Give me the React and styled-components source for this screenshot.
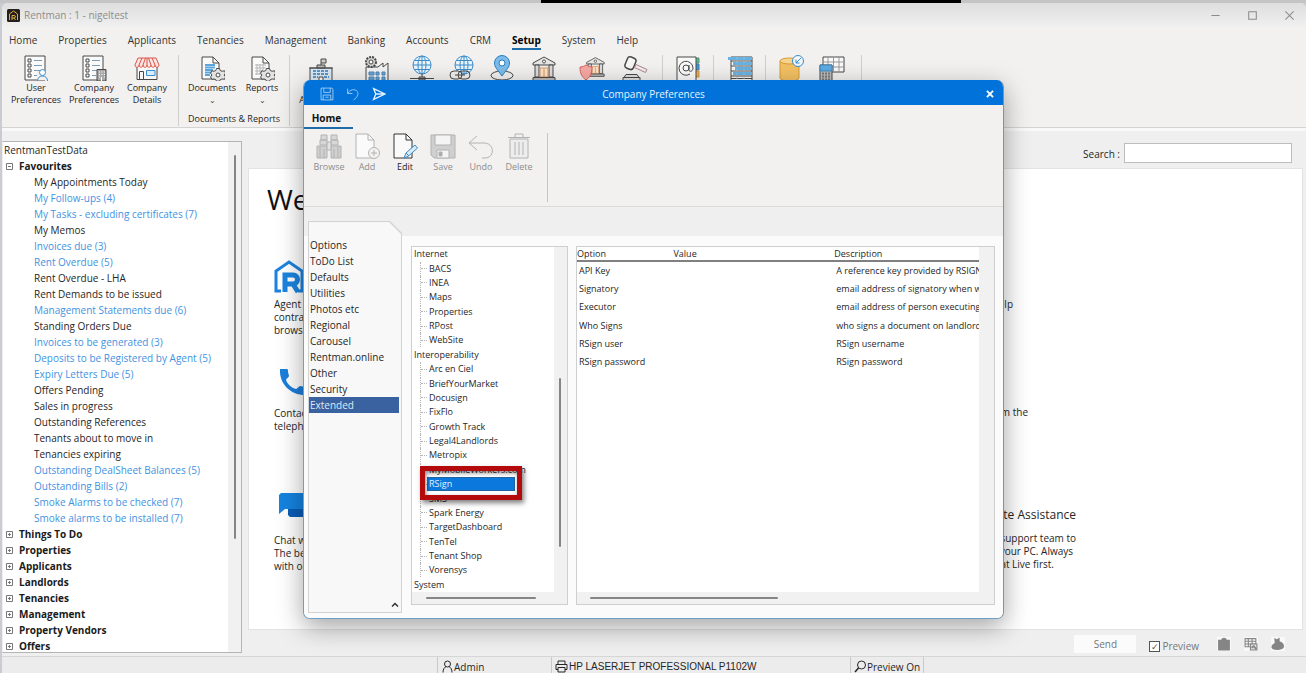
import styled, { createGlobalStyle } from "styled-components";

const menuItems = [
  "Home",
  "Properties",
  "Applicants",
  "Tenancies",
  "Management",
  "Banking",
  "Accounts",
  "CRM",
  "Setup",
  "System",
  "Help",
];

const favourites = [
  ["My Appointments Today"],
  ["My Follow-ups", 4],
  ["My Tasks - excluding certificates", 7],
  ["My Memos"],
  ["Invoices due", 3],
  ["Rent Overdue", 5],
  ["Rent Overdue - LHA"],
  ["Rent Demands to be issued"],
  ["Management Statements due", 6],
  ["Standing Orders Due"],
  ["Invoices to be generated", 3],
  ["Deposits to be Registered by Agent", 5],
  ["Expiry Letters Due", 5],
  ["Offers Pending"],
  ["Sales in progress"],
  ["Outstanding References"],
  ["Tenants about to move in"],
  ["Tenancies expiring"],
  ["Outstanding DealSheet Balances", 5],
  ["Outstanding Bills", 2],
  ["Smoke Alarms to be checked", 7],
  ["Smoke alarms to be installed", 7],
];

const folders = [
  "Things To Do",
  "Properties",
  "Applicants",
  "Landlords",
  "Tenancies",
  "Management",
  "Property Vendors",
  "Offers",
];

const sections = [
  "Options",
  "ToDo List",
  "Defaults",
  "Utilities",
  "Photos etc",
  "Regional",
  "Carousel",
  "Rentman.online",
  "Other",
  "Security",
  "Extended",
];

const extendedTree = [
  {
    name: "Internet",
    children: ["BACS", "INEA", "Maps", "Properties", "RPost", "WebSite"],
  },
  {
    name: "Interoperability",
    children: [
      "Arc en Ciel",
      "BriefYourMarket",
      "Docusign",
      "FixFlo",
      "Growth Track",
      "Legal4Landlords",
      "Metropix",
      "MyMobileWorkers.com",
      "RSign",
      "SMS",
      "Spark Energy",
      "TargetDashboard",
      "TenTel",
      "Tenant Shop",
      "Vorensys",
    ],
  },
  { name: "System", children: [] },
];

const options = [
  ["API Key", "A reference key provided by RSIGN"],
  ["Signatory", "email address of signatory when we sign"],
  ["Executor", "email address of person executing the document"],
  ["Who Signs", "who signs a document on landlords behalf"],
  ["RSign user", "RSign username"],
  ["RSign password", "RSign password"],
];

/* ---------- icons ---------- */

const Icon = ({ size = 26, children, ...rest }) => (
  <IconSvg
    width={size}
    height={size}
    viewBox="0 0 26 26"
    aria-hidden="true"
    {...rest}
  >
    {children}
  </IconSvg>
);

const checklist = (
  <>
    <path d="M2 1h20v24H2z" fill="#fafafa" />
    <path d="M5 4h3v3H5zM5 9h3v3H5zM5 14h3v3H5zM5 19h3v3H5z" />
    <path d="M11 5.500h8M11 10.500h8M11 15.500h6M11 20.500h4" stroke="#7d9db5" />
  </>
);

const UserPrefsIcon = () => (
  <Icon>
    {checklist}
    <path d="M14 25h12v-9H14z" fill="#f2f1f0" stroke="none" />
    <circle cx="19.500" cy="17.500" r="3" stroke="#3a8fd0" fill="#fff" />
    <path d="M14.500 26c0-3 2-5 5-5s5 2 5 5" stroke="#3a8fd0" />
  </Icon>
);

const CompanyPrefsIcon = () => (
  <Icon>
    {checklist}
    <path d="M16 14.500h9V26h-9z" fill="#a9a9a9" />
    <path d="M18 17h1M20.500 17h1M23 17h1M18 19.500h1M20.500 19.500h1M23 19.500h1M18 22h1M23 22h1M20.500 22v4" stroke="#fff" />
  </Icon>
);

const ShopIcon = () => (
  <Icon>
    <path d="M3 11v13.500h20V11" fill="#f7f7f7" />
    <path d="M5.500 16.500h4v8h-4z" />
    <path d="M12.500 15.500h8.500v5h-8.500z" fill="#d8ecfb" stroke="#3a8fd0" />
    <path
      d="M4 3h18l3 7c0 3-4 3-4 0 0 3-4 3-4 0 0 3-4 3-4 0 0 3-4 3-4 0 0 3-4 3-4 0 0 3-4 3-4 0z"
      fill="#fbe4e1"
      stroke="#d9574c"
    />
    <path d="M8 3L5 10M11.500 3L9 10M14.500 3L17 10M18 3l3 7M13 3v7" stroke="#d9574c" />
  </Icon>
);

const gear = (
  <>
    <path
      d="M17.500 13.500h3l.7 2 2 .8 2.300-.6 1 2.600-1.500 1.700 1.500 1.900-1 2.500-2.300-.5-2 .8-.7 1.500h-3l-.7-1.500-1.800-.8-2.200.5-1.200-2.500 1.400-1.900-1.400-1.700 1.200-2.600 2.200.6 1.800-.8z"
      fill="#e4e4e4"
    />
    <circle cx="19" cy="20" r="2" fill="#fff" />
  </>
);

const DocumentsIcon = () => (
  <Icon>
    <path d="M3 2h11l6 6v16H3z" fill="#fafafa" />
    <path d="M14 2v6h6" />
    <path d="M6 10h10M6 12.500h10M6 15h8M6 17.500h6M6 20h5" stroke="#5aa5dc" strokeWidth="2" />
    {gear}
  </Icon>
);

const ReportsIcon = () => (
  <Icon>
    <path d="M3 2h11l6 6v16H3z" fill="#fafafa" />
    <path d="M14 2v6h6" />
    <path d="M6 10h11M6 13h11M6 16h8M6 19h6M8 9v11M11 9v11M14 9v6" stroke="#b5b5b5" />
    {gear}
  </Icon>
);

const SchoolIcon = () => (
  <Icon>
    <path d="M13 10V4h5v4h-5" fill="#ccc" />
    <path d="M2 13h22v13H2z" fill="#dbe9f4" />
    <path d="M1 13h24M9 10h8v3H9z" fill="#bbb" />
    <path d="M5 16h16M5 19h16M5 22h5M16 22h5" stroke="#5a97c8" strokeWidth="2" strokeDasharray="3 1" />
    <path d="M11 22h4v4h-4z" fill="#fff" />
  </Icon>
);

const FactoryIcon = () => (
  <Icon>
    <path d="M3 12v14h22V8l-5 4V8l-5 4z" fill="#f2f2f2" />
    <path d="M6 17h5v3H6zM13 17h3v3h-3zM19 17h3v3h-3zM6 22h5v3H6zM13 22h3v3h-3zM19 22h3v3h-3z" fill="#6aa7d8" stroke="#4a86b8" />
    <circle cx="8" cy="7" r="5" fill="#d2d2d2" strokeWidth="2" strokeDasharray="2 1" />
    <circle cx="8" cy="7" r="2" fill="#fff" />
  </Icon>
);

const globe = (
  <>
    <circle cx="13" cy="10" r="9" fill="#eaf5fd" />
    <ellipse cx="13" cy="10" rx="4" ry="9" />
    <path d="M13 1v18M4 10h18M5.500 5.500h15M5.500 14.500h15" />
  </>
);

const GlobeIcon = () => (
  <Icon>
    <g stroke="#3d8dc9">{globe}</g>
    <path d="M13 19v3M1 23.500h24M10 22h6v3h-6z" fill="#aaa" />
  </Icon>
);

const GlobeLinkIcon = () => (
  <Icon>
    <g stroke="#3d8dc9" transform="translate(2 0)">{globe}</g>
    <rect x="1" y="16" width="12" height="8" rx="4" fill="#f2f1f0" />
    <rect x="9" y="16" width="12" height="8" rx="4" />
    <path d="M6 20h10" />
  </Icon>
);

const PinIcon = () => (
  <Icon>
    <ellipse cx="13" cy="20.500" rx="11" ry="4.500" fill="#f2f1f0" />
    <path d="M13 21C8 14 5.500 12 5.500 8a7.500 7.500 0 0115 0c0 4-2.500 6-7.500 13z" fill="#7dbbea" stroke="#2b7fbf" />
    <circle cx="13" cy="8" r="3" fill="#fff" stroke="#2b7fbf" />
  </Icon>
);

const bank = (
  <>
    <path d="M2 8l11-6 11 6v2H2z" fill="#e6e6e6" />
    <circle cx="13" cy="6.500" r="1.500" fill="#fff" />
    <path d="M4 10h4v12H4zM18 10h4v12h-4z" fill="#ddd" />
    <path d="M9 13h8v9H9z" fill="#fbe3cc" stroke="#d8955c" />
    <path d="M13 14v8" stroke="#d8955c" />
    <path d="M2 22.500h22v3H2z" fill="#bbb" />
  </>
);

const BankIcon = () => <Icon>{bank}</Icon>;

const BankShieldIcon = () => (
  <Icon>
    <g transform="translate(6 1) scale(.8)">{bank}</g>
    <path d="M1 12c3 0 4-1 6-2 2 1 4 2 6 2 0 7-2 10-6 13-4-3-6-6-6-13z" fill="#f5a9a4" stroke="#d9625b" />
  </Icon>
);

const GavelIcon = () => (
  <Icon>
    <rect x="4" y="2" width="9" height="12" rx="3" transform="rotate(22 8 8)" fill="#f6f6f6" strokeWidth="1.500" />
    <path d="M14 9.500l11 5-1.500 3-11-5z" fill="#f6e9ea" stroke="#a58b91" />
    <path d="M4 19.500h11l2 3H2zM1 22.500h17V26H1z" fill="#ddd" />
  </Icon>
);

const AddressIcon = () => (
  <Icon>
    <path d="M20 3h4v5h-4z" fill="#5ab78c" stroke="#4a9a76" />
    <path d="M20 9h4v6h-4z" fill="#4a94d0" stroke="#3a80b8" />
    <path d="M20 16h4v6h-4z" fill="#edae4f" stroke="#d0923a" />
    <path d="M2 2h19v24H2z" fill="#fafafa" />
    <circle cx="11" cy="13" r="3" />
    <path d="M14 10v5c0 2 4 2 4-2a7 7 0 10-3 6" />
  </Icon>
);

const ListIcon = () => (
  <Icon>
    <path d="M4 2h21v24H4z" fill="#f8f8f8" />
    <path d="M1 3.500h24M6 8.500h19M8 13.500h16M6 18.500h19" stroke="#67b2e4" strokeWidth="3" />
    <path d="M4 6h21M4 11h21M4 16h21M4 21h21M4 23.500h21" />
    <path d="M10 2v24M17 2v24" stroke="#9cbdd3" strokeDasharray="2 2" />
  </Icon>
);

const DatabaseIcon = () => (
  <Icon>
    <path d="M2 6v17c0 4 19 4 19 0V6" fill="#f3c163" stroke="#d69a35" />
    <ellipse cx="11.500" cy="6" rx="9.500" ry="3" fill="#f8d58f" stroke="#d69a35" />
    <circle cx="20" cy="6" r="5.500" fill="#f2f8fd" stroke="#3b8dcb" />
    <path d="M23 3l-5 5M18 4.500V8h3.500" stroke="#3b8dcb" />
  </Icon>
);

const CalcTableIcon = () => (
  <Icon>
    <path d="M4 2h21v15H4z" fill="#fafafa" />
    <path d="M4 7h21M4 12h21M9 2v15M14.500 2v15M20 2v15" stroke="#999" />
    <path d="M1 10h12v16H1z" fill="#bcbcbc" />
    <path d="M1 10h12v6H1z" fill="#5cabe4" stroke="#3f86b9" />
    <path d="M3 18.500h8M3 21.500h8M3 24.500h8" stroke="#777" strokeWidth="2" strokeDasharray="2 1" />
  </Icon>
);

const BinocularsIcon = () => (
  <Icon>
    <path d="M5 2h6v5H5zM15 2h6v5h-6zM4 7h7v5H4zM15 7h7v5h-7z" fill="#d8d8d8" />
    <path d="M1 13h10v12H1zM15 13h10v12H15z" fill="#d0d0d0" />
    <path d="M11 9h4v8h-4zM4 13v12M22 13v12M8 16v9M18 16v9" fill="#e2e2e2" />
  </Icon>
);

const page = <path d="M2 1h12l6 6v18H2z" fill="#fafafa" />;

const AddIcon = () => (
  <Icon>
    {page}
    <path d="M14 1v6h6" />
    <circle cx="20" cy="20" r="5.500" fill="#f2f2f2" />
    <path d="M20 17v6M17 20h6" />
  </Icon>
);

const EditIcon = () => (
  <Icon>
    {page}
    <path d="M14 1v6h6" />
    <path d="M12 25l2-5 9-8 2.500 3-9 8z" fill="#d7ebf9" stroke="#3d8ac4" />
    <path d="M14 20l3 3" stroke="#3d8ac4" />
  </Icon>
);

const SaveIcon = () => (
  <Icon>
    <path d="M1 2h24v23H4l-3-3z" fill="#cfcfcf" />
    <path d="M5 2h16v10H5z" fill="#f4f4f4" />
    <path d="M7 17h12v8H7z" fill="#f4f4f4" />
    <path d="M9 19h3v4H9z" fill="#aaa" />
  </Icon>
);

const UndoIcon = () => (
  <Icon>
    <path d="M9 3L1 10l8 7M1 10h15c11 0 11 15 1 15h-3" />
  </Icon>
);

const TrashIcon = () => (
  <Icon>
    <path d="M4 6h18v19H4z" fill="#ededed" />
    <path d="M2 4.500h22M9 4V1h8v3M9 9v13M13 9v13M17 9v13" />
  </Icon>
);

const AppLogo = () => (
  <svg width="13" height="13" viewBox="0 0 26 26" aria-hidden="true">
    <rect width="26" height="26" rx="3" fill="#241f1c" />
    <path d="M5 22V10l8-6 8 6v12" fill="none" stroke="#e0b23c" strokeWidth="2" />
    <path d="M10 22v-9h4c4 0 4 5 0 5h-4m4 0l3 4" fill="none" stroke="#e0b23c" strokeWidth="2" />
  </svg>
);

const RentmanMark = () => (
  <svg width="34" height="34" viewBox="0 0 34 34" fill="none" stroke="#1b84e0" aria-hidden="true">
    <path d="M7 31H2V11L15 2l13 9v20h-4" strokeWidth="3" />
    <path d="M11 32V15h8c6 0 6 9 0 9h-8m8 0l5 8" strokeWidth="5" />
  </svg>
);

const PhoneMark = () => (
  <svg width="30" height="28" viewBox="0 0 30 28" aria-hidden="true">
    <path
      d="M1 1h7c1 0 1 1 1 3l1 4c0 1-3 3-3 4 2 5 6 8 10 9 1 0 3-3 4-3l6 1c1 0 1 1 1 3v5C12 28 0 16 1 1z"
      fill="#1b7fdc"
    />
  </svg>
);

const ChatMark = () => (
  <svg width="40" height="24" viewBox="0 0 40 24" aria-hidden="true">
    <path d="M9 8h28v16H11l-2-2z" fill="#0a5cb8" />
    <path d="M2 0h26v16H6l-6 5V2z" fill="#1583e0" />
  </svg>
);

/* ---------- app ---------- */

const ribbonRest = [
  ["Your Addresses", SchoolIcon, 58],
  ["Suppliers", FactoryIcon, 52],
  ["Web", GlobeIcon, 40],
  ["Links", GlobeLinkIcon, 40],
  ["Areas", PinIcon, 40],
  ["Banks", BankIcon, 44],
  ["Deposit", BankShieldIcon, 52],
  ["Legal", GavelIcon, 34],
];

const dialogTools = [
  ["Browse", BinocularsIcon],
  ["Add", AddIcon],
  ["Edit", EditIcon],
  ["Save", SaveIcon],
  ["Undo", UndoIcon],
  ["Delete", TrashIcon],
];

const RibbonItem = ({ label, icon: Glyph, width }) => (
  <RibbonButton type="button" $width={width}>
    <Glyph />
    <span>{label}</span>
  </RibbonButton>
);

const Ribbon = () => (
  <RibbonBar>
    <RibbonItem label="User Preferences" icon={UserPrefsIcon} width={58} />
    <RibbonItem label="Company Preferences" icon={CompanyPrefsIcon} width={58} />
    <RibbonItem label="Company Details" icon={ShopIcon} width={48} />
    <Divider $before={7} $after={5} />
    <RibbonGroup>
      <div>
        <RibbonButton type="button" $width={56}>
          <DocumentsIcon />
          <span>Documents</span>
          <small>⌄</small>
        </RibbonButton>
        <RibbonButton type="button" $width={44}>
          <ReportsIcon />
          <span>Reports</span>
          <small>⌄</small>
        </RibbonButton>
      </div>
      <GroupLabel>Documents &amp; Reports</GroupLabel>
    </RibbonGroup>
    <Divider $before={5} $after={2} />
    {ribbonRest.map(([label, icon, width]) => (
      <RibbonItem key={label} label={label} icon={icon} width={width} />
    ))}
    <Divider $before={10} $after={10} />
    <RibbonItem label="Email" icon={AddressIcon} width={30} />
    <Divider $before={10} $after={10} />
    <RibbonItem label="Lists" icon={ListIcon} width={32} />
    <Divider $before={9} $after={9} />
    <RibbonItem label="Data" icon={DatabaseIcon} width={32} />
    <RibbonItem label="Rates" icon={CalcTableIcon} width={50} />
    <Divider $before={4} $after={0} />
  </RibbonBar>
);

const NavigationTree = () => (
  <NavPanel>
    <NavList>
      <li>RentmanTestData</li>
      <NavFolder>
        <Expander aria-label="Collapse Favourites">
          <svg width="7" height="7" viewBox="0 0 7 7">
            <path d="M.5.5h6v6h-6zM2 3.500h3" />
          </svg>
        </Expander>
        Favourites
      </NavFolder>
      {favourites.map(([label, count]) => (
        <NavItem key={label}>
          <NavLink href="#" $pending={count > 0}>
            {label}
            {count ? ` (${count})` : ""}
          </NavLink>
        </NavItem>
      ))}
      {folders.map((name) => (
        <NavFolder key={name}>
          <Expander aria-label={`Expand ${name}`}>
            <svg width="7" height="7" viewBox="0 0 7 7">
              <path d="M.5.5h6v6h-6zM2 3.500h3M3.500 2v3" />
            </svg>
          </Expander>
          {name}
        </NavFolder>
      ))}
    </NavList>
    <VerticalTrack $pad="13px 0 113px">
      <VerticalThumb />
    </VerticalTrack>
  </NavPanel>
);

const Welcome = () => (
  <WelcomePanel>
    <h1>Welcome to Rentman</h1>
    <Cards>
      <Card $gap={4}>
        <RentmanMark />
        <p>
          Agent
          <br />
          contracts
          <br />
          browser
        </p>
      </Card>
      <RightCard>
        <TailLine $end={63}>Online help</TailLine>
      </RightCard>
      <Card $gap={11} $shift>
        <PhoneMark />
        <p>
          Contact us
          <br />
          telephone
        </p>
      </Card>
      <RightCard>
        <TailLine $end={48}>Download from the</TailLine>
      </RightCard>
      <Card $gap={17} $shift>
        <ChatMark />
        <p>
          Chat with us
          <br />
          The best way
          <br />
          with our team
        </p>
      </Card>
      <RightCard>
        <h2>Remote Assistance</h2>
        <TailLine $end={0}>Allow our support team to</TailLine>
        <TailLine $end={3}>connect to your PC. Always</TailLine>
        <TailLine $end={22}>Chat Live first.</TailLine>
      </RightCard>
    </Cards>
  </WelcomePanel>
);

const TreeNode = ({ name }) =>
  name === "RSign" ? (
    <Leaf>
      <Selected>
        {name}
        <Callout />
      </Selected>
    </Leaf>
  ) : (
    <Leaf>{name}</Leaf>
  );

const ExtendedTree = () => (
  <TreeFrame>
    <TreeArea>
      <TreeRows>
        {extendedTree.map((group) => (
          <TreeGroup key={group.name} $rows={group.children.length + 1}>
            <div>{group.name}</div>
            {group.children.map((name) => (
              <TreeNode key={name} name={name} />
            ))}
          </TreeGroup>
        ))}
      </TreeRows>
      <HorizontalTrack $pad="5px 18px 5px 14px">
        <HorizontalThumb />
      </HorizontalTrack>
    </TreeArea>
    <VerticalTrack $pad="131px 2px 57px 0">
      <VerticalThumb />
    </VerticalTrack>
  </TreeFrame>
);

const OptionsTable = () => (
  <TableFrame>
    <TableArea>
      <Table>
        <thead>
          <tr>
            <th>Option</th>
            <th>Value</th>
            <th>Description</th>
          </tr>
        </thead>
        <tbody>
          {options.map(([name, description]) => (
            <tr key={name}>
              <td>{name}</td>
              <td />
              <td>{description}</td>
            </tr>
          ))}
        </tbody>
      </Table>
      <HorizontalTrack $pad="5px 50% 5px 13px">
        <HorizontalThumb />
      </HorizontalTrack>
    </TableArea>
    <VerticalTrack $width={15} />
  </TableFrame>
);

const PreferencesDialog = () => (
  <DialogLayer>
    <Dialog role="dialog" aria-label="Company Preferences">
      <DialogTitle>
        <QuickTools>
          <button type="button" aria-label="Save">
            <Icon size={14}>
              <path d="M2 2h20l2 2v20H2zM7 2v8h12V2M6 24V15h14v9M10 19h6" strokeWidth="1.500" />
            </Icon>
          </button>
          <button type="button" aria-label="Undo">
            <Icon size={14}>
              <path d="M3 3v9h9M3 12C9 1 24 4 22 14c-1 5-5 8-8 10" strokeWidth="1.500" />
            </Icon>
          </button>
          <button type="button" aria-label="Send">
            <Icon size={14}>
              <path d="M3 3l21 10L3 23l4-10zM7 13h17" stroke="#e4f2ff" strokeWidth="2.500" />
            </Icon>
          </button>
        </QuickTools>
        <span>Company Preferences</span>
        <CloseButton type="button" aria-label="Close">
          <Icon size={8}>
            <path d="M3 3l20 20M23 3L3 23" strokeWidth="6" />
          </Icon>
        </CloseButton>
      </DialogTitle>
      <DialogRibbon>
        <DialogTab type="button">Home</DialogTab>
        <ToolRow>
          {dialogTools.map(([label, Glyph]) => (
            <Tool key={label} type="button" disabled={label !== "Edit"}>
              <Glyph />
              <span>{label}</span>
            </Tool>
          ))}
          <ToolDivider />
        </ToolRow>
      </DialogRibbon>
      <DialogBody>
        <SectionTab>
          <SectionTabInner>
            <SectionList>
              {sections.map((name) => (
                <SectionButton key={name} type="button" $active={name === "Extended"}>
                  {name}
                </SectionButton>
              ))}
            </SectionList>
            <svg width="8" height="5" viewBox="0 0 8 5" fill="none" stroke="#333" aria-hidden="true">
              <path d="M1 4.500l3-3 3 3" strokeWidth="1.500" />
            </svg>
          </SectionTabInner>
        </SectionTab>
        <SectionContent>
          <ExtendedTree />
          <OptionsTable />
        </SectionContent>
      </DialogBody>
    </Dialog>
  </DialogLayer>
);

const App = () => (
  <Desktop>
    <GlobalStyle />
    <BackStrip>
      <i />
      <b />
      <i />
    </BackStrip>
    <Window>
      <TitleBar>
        <AppLogo />
        <span>Rentman : 1 - nigeltest</span>
        <WindowButtons>
          <button type="button" aria-label="Minimise">
            <Icon size={9}>
              <path d="M1 13h24" strokeWidth="3" />
            </Icon>
          </button>
          <button type="button" aria-label="Maximise">
            <Icon size={9}>
              <path d="M2 2h22v22H2z" strokeWidth="3" />
            </Icon>
          </button>
          <button type="button" aria-label="Close">
            <Icon size={9}>
              <path d="M1 1l24 24M25 1L1 25" strokeWidth="3" />
            </Icon>
          </button>
        </WindowButtons>
      </TitleBar>
      <MenuBar>
        {menuItems.map((name) => (
          <MenuButton key={name} type="button" $active={name === "Setup"}>
            {name}
          </MenuButton>
        ))}
      </MenuBar>
      <Ribbon />
      <Workspace>
        <NavigationTree />
        <MainColumn>
          <SearchRow>
            <label htmlFor="search">Search :</label>
            <input id="search" type="text" />
          </SearchRow>
          <Welcome />
          <ActionRow>
            <SendButton type="button">Send</SendButton>
            <PreviewLabel>
              <input type="checkbox" defaultChecked />
              Preview
            </PreviewLabel>
            <SmallButton type="button" aria-label="Clipboard">
              <Icon size={14}>
                <path d="M2 5h6c0-5 10-5 10 0h6v20H2z" fill="#858585" stroke="none" />
              </Icon>
            </SmallButton>
            <SmallButton type="button" aria-label="Find in list">
              <Icon size={14}>
                <path d="M2 3h20v15H2zM2 8h20M2 13h20M8 3v15M15 3v15" stroke="#858585" strokeWidth="2" />
                <path d="M12 13h12v11H12z" fill="#ddd" stroke="#858585" strokeWidth="2" />
                <path d="M14 20l4-3 5 6" stroke="#858585" strokeWidth="3" />
              </Icon>
            </SmallButton>
            <SmallButton type="button" aria-label="Money bag">
              <Icon size={14}>
                <path d="M6 2l5 2 5-3v7c6 2 9 6 8 11-2 6-21 7-23 1-1-4 2-7 6-9z" fill="#858585" stroke="none" />
              </Icon>
            </SmallButton>
          </ActionRow>
        </MainColumn>
      </Workspace>
      <StatusBar>
        <StatusCell $basis="436px" />
        <StatusCell $basis="114px">
          <Icon size={13}>
            <circle cx="13" cy="8" r="6" strokeWidth="2" />
            <path d="M4 25c0-7 3-10 6-12M22 25c0-7-3-10-6-12" strokeWidth="2" />
          </Icon>
          Admin
        </StatusCell>
        <StatusCell $basis="299px" $plain>
          <Icon size={13}>
            <path d="M6 9V2h14v7M6 19H2V9h22v10h-4M6 15h14v9H6z" strokeWidth="2" />
          </Icon>
          HP LASERJET PROFESSIONAL P1102W
        </StatusCell>
        <StatusCell $basis="73px">
          <Icon size={13}>
            <circle cx="15" cy="10" r="8" strokeWidth="2" />
            <path d="M9 16l-7 8" strokeWidth="3" />
          </Icon>
          Preview On
        </StatusCell>
      </StatusBar>
    </Window>
    <PreferencesDialog />
  </Desktop>
);

/* ---------- styles ---------- */

const GlobalStyle = createGlobalStyle`
  * {
    box-sizing: border-box;
  }
  body {
    margin: 0;
    font-family: "Open Sans", "Noto Sans", sans-serif;
    font-size: 10px;
    line-height: 16px;
    color: #262626;
  }
  button, input {
    font: inherit;
    color: inherit;
  }
  button {
    padding: 0;
    border: 0;
    background: none;
  }
  ul {
    margin: 0;
    padding: 0;
    list-style: none;
  }
  a {
    text-decoration: none;
  }
`;

const IconSvg = styled.svg`
  flex: none;
  fill: none;
  stroke: currentColor;
`;

const Desktop = styled.div`
  position: relative;
  display: flex;
  flex-direction: column;
  height: 100vh;
  min-height: 640px;
  background: #c9cdd2;
  overflow: hidden;
`;

const BackStrip = styled.div`
  display: flex;
  height: 3px;
  i {
    flex: 541;
    background: #c4c4c4;
  }
  b {
    flex: 420;
    background: #000;
  }
  b + i {
    flex: 345;
  }
`;

const Window = styled.div`
  flex: 1;
  min-height: 0;
  display: flex;
  flex-direction: column;
  margin-left: 2px;
  border-radius: 6px 6px 0 0;
  background: #f2f1f0;
`;

const TitleBar = styled.header`
  display: flex;
  align-items: center;
  gap: 4px;
  height: 24px;
  padding: 0 12px 0 5px;
  border-radius: 6px 6px 0 0;
  background: linear-gradient(#dedede, #f0f0f0);
  color: #8c8c8c;
`;

const WindowButtons = styled.div`
  display: flex;
  gap: 28px;
  margin-left: auto;
  button {
    display: flex;
  }
`;

const MenuBar = styled.nav`
  display: flex;
  gap: 21px;
  height: 26px;
  padding: 5px 7px;
`;

const MenuButton = styled.button`
  height: 18px;
  border-bottom: 2px solid ${(props) => (props.$active ? "#1f6cab" : "transparent")};
  font-weight: ${(props) => (props.$active ? 700 : 400)};
  color: ${(props) => (props.$active ? "#000" : "#333")};
`;

const RibbonBar = styled.div`
  display: flex;
  height: 75px;
  padding: 2px 5px 1px;
  border-bottom: 1px solid #d4d4d4;
`;

const RibbonButton = styled.button`
  display: flex;
  flex-direction: column;
  align-items: center;
  flex: none;
  width: ${(props) => props.$width}px;
  font-size: 9px;
  line-height: 12px;
  color: #484848;
  span {
    margin-top: 1px;
    color: #262626;
  }
`;

const RibbonGroup = styled.div`
  display: flex;
  flex-direction: column;
  justify-content: space-between;
  > div {
    display: flex;
  }
`;

const GroupLabel = styled.span`
  font-size: 9px;
  line-height: 14px;
  text-align: center;
  white-space: nowrap;
`;

const Divider = styled.span`
  flex: none;
  width: 1px;
  margin: 0 ${(props) => props.$after}px 0 ${(props) => props.$before}px;
  background: #cfcfcf;
`;

const Workspace = styled.main`
  flex: 1;
  min-height: 0;
  display: flex;
  gap: 6px;
  padding: 14px 3px 0 0;
  border-top: 3px solid #f8f8f8;
  background: #efefef;
`;

const NavPanel = styled.nav`
  display: flex;
  flex: none;
  width: 240px;
  margin: -4px 0 3px;
  border: 1px solid #b4b4b4;
  border-left-color: #eee;
  background: #fff;
`;

const NavList = styled.ul`
  flex: 1;
  overflow: hidden;
  padding-left: 1px;
  white-space: nowrap;
  li {
    height: 16px;
  }
`;

const NavFolder = styled.li`
  display: flex;
  align-items: center;
  gap: 6px;
  padding-left: 2px;
  font-weight: 700;
  color: #1a1a1a;
`;

const Expander = styled.button`
  display: flex;
  svg {
    fill: none;
    stroke: #777;
  }
`;

const NavItem = styled.li`
  padding-left: 30px;
`;

const NavLink = styled.a`
  color: ${(props) => (props.$pending ? "#3f92df" : "#262626")};
`;

const VerticalTrack = styled.div`
  display: flex;
  justify-content: center;
  flex: none;
  width: ${(props) => props.$width || 13}px;
  padding: ${(props) => props.$pad || 0};
  background: #f1f1f1;
`;

const VerticalThumb = styled.span`
  width: 2px;
  border-radius: 1px;
  background: #858585;
`;

const HorizontalTrack = styled.div`
  flex: none;
  height: 12px;
  padding: ${(props) => props.$pad};
  background: #f1f1f1;
`;

const HorizontalThumb = styled.span`
  display: block;
  height: 2px;
  border-radius: 1px;
  background: #858585;
`;

const MainColumn = styled.section`
  flex: 1;
  min-width: 0;
  display: flex;
  flex-direction: column;
`;

const SearchRow = styled.div`
  display: flex;
  justify-content: flex-end;
  align-items: flex-start;
  gap: 4px;
  height: 25px;
  padding: 0 11px;
  margin-top: -2px;
  label {
    line-height: 22px;
  }
  input {
    width: 168px;
    height: 20px;
    border: 1px solid #bdbdbd;
    background: #fff;
  }
`;

const WelcomePanel = styled.div`
  flex: 1;
  min-height: 0;
  padding: 10px 0 0 18px;
  border: 1px solid #e3e3e3;
  background: #fff;
  overflow: hidden;
  h1 {
    margin: 0;
    font-size: 28px;
    font-weight: 400;
    line-height: 40px;
    color: #111;
  }
`;

const Cards = styled.div`
  display: grid;
  grid-template-columns: 1fr 1fr;
  grid-template-rows: 108px 125px auto;
  padding: 41px 226px 0 7px;
  line-height: 13px;
`;

const Card = styled.div`
  display: flex;
  flex-direction: column;
  gap: ${(props) => props.$gap}px;
  svg {
    margin-left: ${(props) => (props.$shift ? 5 : 0)}px;
  }
  p {
    margin: 0;
  }
`;

const RightCard = styled.div`
  padding-top: 38px;
  text-align: right;
  &:last-child {
    padding-top: 14px;
  }
  h2 {
    margin: 0 0 9px;
    font-size: 12px;
    font-weight: 400;
    line-height: 16px;
  }
`;

const TailLine = styled.div`
  padding-right: ${(props) => props.$end}px;
`;

const ActionRow = styled.div`
  display: flex;
  align-items: center;
  justify-content: flex-end;
  gap: 13px;
  height: 26px;
  padding: 2px 18px 0 0;
  color: #777;
`;

const SendButton = styled.button`
  width: 62px;
  height: 18px;
  background: #fbfbfb;
`;

const PreviewLabel = styled.label`
  display: flex;
  align-items: center;
  gap: 2px;
  padding-top: 4px;
  margin-right: 5px;
  input {
    appearance: none;
    display: flex;
    align-items: center;
    justify-content: center;
    width: 11px;
    height: 11px;
    margin: 0;
    border: 1px solid #555;
    background: #fff;
  }
  input:checked::after {
    content: "✓";
    font-size: 9px;
    line-height: 9px;
    color: #555;
  }
`;

const SmallButton = styled.button`
  display: flex;
  background: #f9f9f9;
`;

const StatusBar = styled.footer`
  display: flex;
  flex: none;
  height: 17px;
  border-top: 1px solid #d6d6d6;
  background: #ececec;
`;

const StatusCell = styled.div`
  display: flex;
  align-items: center;
  flex: none;
  gap: ${(props) => (props.$plain ? 1 : 0)}px;
  width: ${(props) => props.$basis};
  padding: 3px 3px 0;
  border-right: 1px solid #cacaca;
  white-space: nowrap;
  font-family: ${(props) => (props.$plain ? '"Liberation Sans", Arial, sans-serif' : "inherit")};
`;

/* dialog floats over the main window */
const DialogLayer = styled.div`
  position: absolute;
  inset: 0;
  display: flex;
  padding: 80px 302px 54px 303px;
`;

const Dialog = styled.section`
  flex: 1;
  min-width: 0;
  display: flex;
  flex-direction: column;
  border: 1px solid #6f9fc4;
  border-top: 0;
  border-right-color: #8f8f8f;
  border-radius: 7px;
  background: #fbfbfb;
  box-shadow: 0 8px 26px rgba(0, 0, 0, 0.36);
  overflow: hidden;
`;

const DialogTitle = styled.header`
  display: grid;
  grid-template-columns: 1fr auto 1fr;
  align-items: center;
  flex: none;
  height: 25px;
  margin: 0 -1px;
  padding: 3px 10px 0;
  background: #0072da;
  color: #e9f4ff;
`;

const QuickTools = styled.div`
  display: flex;
  gap: 12px;
  padding-left: 7px;
  button {
    display: flex;
    color: #b5d8f8;
  }
`;

const CloseButton = styled.button`
  display: flex;
  justify-self: end;
  color: #fff;
`;

const DialogRibbon = styled.div`
  flex: none;
  height: 102px;
  border-bottom: 1px solid #dadada;
  background: #f2f1f0;
`;

const DialogTab = styled.button`
  display: block;
  width: 49px;
  height: 24px;
  padding: 3px 4px 0 0;
  border-bottom: 2px solid #1f6cab;
  font-weight: 700;
  color: #111;
`;

const ToolRow = styled.div`
  display: flex;
  padding: 4px 6px;
`;

const Tool = styled.button`
  display: flex;
  flex-direction: column;
  align-items: center;
  width: 38px;
  font-size: 9px;
  color: ${(props) => (props.disabled ? "#b2b2b2" : "#333")};
  span {
    color: ${(props) => (props.disabled ? "#8c8c8c" : "#222")};
  }
`;

const ToolDivider = styled.span`
  width: 1px;
  height: 69px;
  margin-left: 9px;
  background: #c6c6c6;
`;

const DialogBody = styled.div`
  flex: 1;
  min-height: 0;
  display: flex;
  padding: 14px 2px 5px 4px;
  background: linear-gradient(#efefef 28px, #e2e2e2 28px, #fbfbfb 29px);
`;

/* two stacked clipped boxes give the tab its bevelled corner outline */
const SectionTab = styled.div`
  display: flex;
  flex: none;
  width: 94px;
  padding: 1px;
  background: #d2d2d2;
  clip-path: polygon(0 0, calc(100% - 12px) 0, 100% 12px, 100% 100%, 0 100%);
`;

const SectionTabInner = styled.div`
  flex: 1;
  display: flex;
  flex-direction: column;
  justify-content: space-between;
  padding: 15px 2px 5px 0;
  background: #f8f8f8;
  clip-path: polygon(0 0, calc(100% - 12px) 0, 100% 12px, 100% 100%, 0 100%);
  > svg {
    align-self: flex-end;
  }
`;

const SectionList = styled.div`
  display: flex;
  flex-direction: column;
`;

const SectionButton = styled.button`
  height: 16px;
  padding-left: 1px;
  text-align: left;
  color: ${(props) => (props.$active ? "#dfe9f5" : "#262626")};
  background: ${(props) => (props.$active ? "#3a62a0" : "none")};
`;

const SectionContent = styled.div`
  flex: 1;
  min-width: 0;
  display: flex;
  gap: 8px;
  padding: 25px 6px 8px 9px;
`;

const TreeFrame = styled.div`
  display: flex;
  flex: none;
  width: 157px;
  border: 1px solid #cfcfcf;
  background: #fff;
`;

const TreeArea = styled.div`
  flex: 1;
  min-width: 0;
  display: flex;
  flex-direction: column;
`;

const TreeRows = styled.ul`
  flex: 1;
  display: flex;
  flex-direction: column;
  padding-left: 2px;
`;

const TreeGroup = styled.li`
  flex: ${(props) => props.$rows};
  display: grid;
  grid-auto-rows: 1fr;
  align-items: center;
  font-size: 9px;
  line-height: 14px;
`;

const Leaf = styled.div`
  display: flex;
  align-items: center;
  margin-left: 6px;
  border-left: 1px dotted #b5b5b5;
  white-space: nowrap;
  &::before {
    content: "";
    width: 6px;
    margin-right: 2px;
    border-top: 1px dotted #b5b5b5;
  }
`;

const Selected = styled.span`
  position: relative;
  width: 88px;
  margin-left: -2px;
  padding-left: 2px;
  background: #0a78dc;
  color: #e4f1fd;
  box-shadow: inset 0 0 0 1px #24649f;
`;

const Callout = styled.span`
  position: absolute;
  inset: -11px -7px -9px -7px;
  border: 5px solid #b40a0c;
  box-shadow: 2px 3px 5px rgba(0, 0, 0, 0.5), inset 1px 2px 4px rgba(0, 0, 0, 0.45);
`;

const TableFrame = styled.div`
  flex: 1;
  min-width: 0;
  display: flex;
  border: 1px solid #cfcfcf;
  background: #fff;
`;

const TableArea = styled.div`
  flex: 1;
  min-width: 0;
  display: flex;
  flex-direction: column;
  justify-content: space-between;
  overflow: hidden;
`;

const Table = styled.table`
  width: 100%;
  height: 125px;
  border-collapse: collapse;
  table-layout: fixed;
  font-size: 9px;
  line-height: 13px;
  th,
  td {
    padding: 0 0 2px 2px;
    text-align: left;
    font-weight: 400;
    white-space: nowrap;
    overflow: hidden;
  }
  th {
    height: 14px;
    padding: 0;
    line-height: 12px;
    border-bottom: 2px solid #808080;
  }
  th:nth-child(1) {
    width: 24%;
  }
  th:nth-child(2) {
    width: 40%;
  }
`;

export default App;
